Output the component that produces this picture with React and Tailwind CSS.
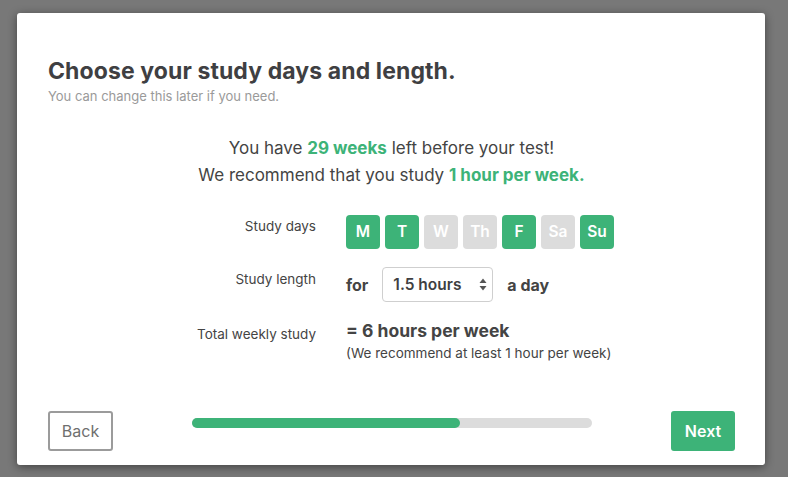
import React, { useState } from "react";

const DAYS = [
  { key: "M", on: true },
  { key: "T", on: true },
  { key: "W", on: false },
  { key: "Th", on: false },
  { key: "F", on: true },
  { key: "Sa", on: false },
  { key: "Su", on: true },
];

function App() {
  const [days, setDays] = useState(DAYS);
  const [length, setLength] = useState("1.5");

  const toggleDay = (key) => {
    setDays(days.map((d) => (d.key === key ? { ...d, on: !d.on } : d)));
  };

  return (
    <div
      className="w-[788px] h-[477px] bg-[#787878] pl-[17px] pt-[13px] overflow-hidden"
      style={{ fontFamily: "Inter, 'Noto Sans', sans-serif" }}
    >
      <div className="w-[748px] h-[452px] bg-white rounded-[3px] shadow-[0_2px_10px_rgba(0,0,0,0.45)] flex flex-col pl-[31px] pr-[30px] pt-[44px] pb-[14px]">
        {/* header */}
        <h1 className="text-[23px] leading-[29px] font-bold text-[#3f3f42] tracking-[0.1px]">
          Choose your study days and length.
        </h1>
        <p className="text-[13px] leading-[17px] text-[#9a9a9a] mt-[2px]">
          You can change this later if you need.
        </p>

        {/* recommendation */}
        <div className="mt-[30px] text-center text-[17px] leading-[27px] text-[#444]">
          <p>
            You have <span className="font-bold text-[#3db378]">29 weeks</span>{" "}
            left before your test!
          </p>
          <p>
            We recommend that you study{" "}
            <span className="font-bold text-[#3db378]">1 hour per week.</span>
          </p>
        </div>

        {/* form */}
        <div className="mt-[26px] grid grid-cols-[268px_1fr] gap-x-[30px] gap-y-[18px] items-start">
          <div className="text-right text-[13.5px] text-[#444] pt-[1px]">
            Study days
          </div>
          <div className="flex gap-[5px]">
            {days.map((d) => (
              <button
                key={d.key}
                type="button"
                onClick={() => toggleDay(d.key)}
                className={`w-[34px] h-[34px] rounded-[4px] text-white text-[15.5px] font-semibold flex items-center justify-center ${
                  d.on ? "bg-[#3db378]" : "bg-[#dcdcdc]"
                }`}
              >
                {d.key}
              </button>
            ))}
          </div>

          <div className="text-right text-[13.5px] text-[#444] pt-[2px]">
            Study length
          </div>
          <div className="flex items-center text-[16px] font-bold text-[#444]">
            <span>for</span>
            <div className="relative ml-[14px]">
              <select
                value={length}
                onChange={(e) => setLength(e.target.value)}
                className="appearance-none w-[111px] h-[35px] border border-[#cfcfcf] rounded-[4px] pl-[10px] text-[15.5px] font-semibold text-[#3f3f42] bg-white outline-none"
              >
                <option value="0.5">0.5 hours</option>
                <option value="1">1 hour</option>
                <option value="1.5">1.5 hours</option>
                <option value="2">2 hours</option>
              </select>
              <svg
                className="absolute right-[6px] top-[11px] pointer-events-none"
                width="8"
                height="13"
                viewBox="0 0 8 13"
              >
                <path d="M4 0.5 L7.5 5 H0.5 Z" fill="#555" />
                <path d="M4 12.5 L7.5 8 H0.5 Z" fill="#555" />
              </svg>
            </div>
            <span className="ml-[14px]">a day</span>
          </div>

          <div className="text-right text-[13.5px] text-[#444] pt-[4px]">
            Total weekly study
          </div>
          <div className="text-[#444]">
            <div className="text-[17.5px] leading-[22px] font-bold">
              = 6 hours per week
            </div>
            <div className="text-[13.5px] leading-[18px] mt-[2px]">
              (We recommend at least 1 hour per week)
            </div>
          </div>
        </div>

        {/* footer */}
        <div className="mt-auto flex items-center justify-between">
          <button
            type="button"
            className="w-[65px] h-[40px] border-2 border-[#9b9b9b] rounded-[3px] text-[16px] text-[#6f6f6f]"
          >
            Back
          </button>
          <div className="w-[400px] h-[10px] rounded-full bg-[#dcdcdc] -mt-[16px]">
            <div className="h-full rounded-full bg-[#3db378]" style={{ width: "67%" }} />
          </div>
          <button
            type="button"
            className="w-[64px] h-[40px] rounded-[3px] bg-[#3db378] text-[16px] font-semibold text-white"
          >
            Next
          </button>
        </div>
      </div>
    </div>
  );
}

export default App;
